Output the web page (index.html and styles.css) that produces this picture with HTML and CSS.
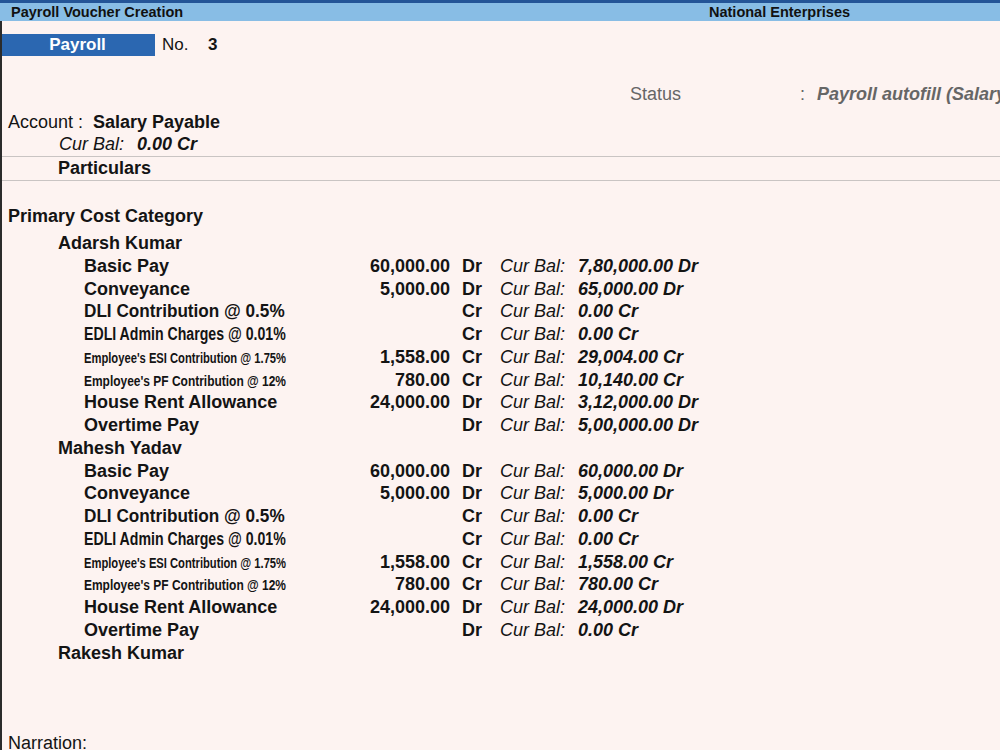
FILE: index.html
```html
<!DOCTYPE html>
<html>
<head>
    <title>Payroll Voucher Creation</title>
    <link rel="stylesheet" href="styles.css">
</head>
<body>
    <div class="titlebar">
        <span class="title">Payroll Voucher Creation</span>
        <span class="company">National Enterprises</span>
    </div>

    <div class="page">
        <div class="voucher-head">
            <span class="vtype">Payroll</span>
            <span class="vno-label">No.</span>
            <span class="vno">3</span>
        </div>

        <div class="status">
            <span class="status-label">Status</span>
            <span class="status-colon">:</span>
            <span class="status-value">Payroll autofill (Salary)</span>
        </div>

        <div class="account">
            <span class="account-label">Account :</span>
            <span class="account-name">Salary Payable</span>
        </div>
        <div class="account-bal">
            <span class="bal-label">Cur Bal:</span>
            <span class="bal-value">0.00 Cr</span>
        </div>

        <div class="particulars">Particulars</div>

        <div class="category">Primary Cost Category</div>

        <div class="person">Adarsh Kumar</div>
        <div class="line"><span class="name">Basic Pay</span><span class="amt">60,000.00</span><span class="drcr">Dr</span><span class="cb">Cur Bal:</span><span class="cbv">7,80,000.00 Dr</span></div>
        <div class="line"><span class="name">Conveyance</span><span class="amt">5,000.00</span><span class="drcr">Dr</span><span class="cb">Cur Bal:</span><span class="cbv">65,000.00 Dr</span></div>
        <div class="line"><span class="name"><span class="fit-dli">DLI Contribution @ 0.5%</span></span><span class="amt"></span><span class="drcr">Cr</span><span class="cb">Cur Bal:</span><span class="cbv">0.00 Cr</span></div>
        <div class="line"><span class="name"><span class="fit-edli">EDLI Admin Charges @ 0.01%</span></span><span class="amt"></span><span class="drcr">Cr</span><span class="cb">Cur Bal:</span><span class="cbv">0.00 Cr</span></div>
        <div class="line"><span class="name"><span class="fit-esi">Employee's ESI Contribution @ 1.75%</span></span><span class="amt">1,558.00</span><span class="drcr">Cr</span><span class="cb">Cur Bal:</span><span class="cbv">29,004.00 Cr</span></div>
        <div class="line"><span class="name"><span class="fit-pf">Employee's PF Contribution @ 12%</span></span><span class="amt">780.00</span><span class="drcr">Cr</span><span class="cb">Cur Bal:</span><span class="cbv">10,140.00 Cr</span></div>
        <div class="line"><span class="name">House Rent Allowance</span><span class="amt">24,000.00</span><span class="drcr">Dr</span><span class="cb">Cur Bal:</span><span class="cbv">3,12,000.00 Dr</span></div>
        <div class="line"><span class="name">Overtime Pay</span><span class="amt"></span><span class="drcr">Dr</span><span class="cb">Cur Bal:</span><span class="cbv">5,00,000.00 Dr</span></div>

        <div class="person">Mahesh Yadav</div>
        <div class="line"><span class="name">Basic Pay</span><span class="amt">60,000.00</span><span class="drcr">Dr</span><span class="cb">Cur Bal:</span><span class="cbv">60,000.00 Dr</span></div>
        <div class="line"><span class="name">Conveyance</span><span class="amt">5,000.00</span><span class="drcr">Dr</span><span class="cb">Cur Bal:</span><span class="cbv">5,000.00 Dr</span></div>
        <div class="line"><span class="name"><span class="fit-dli">DLI Contribution @ 0.5%</span></span><span class="amt"></span><span class="drcr">Cr</span><span class="cb">Cur Bal:</span><span class="cbv">0.00 Cr</span></div>
        <div class="line"><span class="name"><span class="fit-edli">EDLI Admin Charges @ 0.01%</span></span><span class="amt"></span><span class="drcr">Cr</span><span class="cb">Cur Bal:</span><span class="cbv">0.00 Cr</span></div>
        <div class="line"><span class="name"><span class="fit-esi">Employee's ESI Contribution @ 1.75%</span></span><span class="amt">1,558.00</span><span class="drcr">Cr</span><span class="cb">Cur Bal:</span><span class="cbv">1,558.00 Cr</span></div>
        <div class="line"><span class="name"><span class="fit-pf">Employee's PF Contribution @ 12%</span></span><span class="amt">780.00</span><span class="drcr">Cr</span><span class="cb">Cur Bal:</span><span class="cbv">780.00 Cr</span></div>
        <div class="line"><span class="name">House Rent Allowance</span><span class="amt">24,000.00</span><span class="drcr">Dr</span><span class="cb">Cur Bal:</span><span class="cbv">24,000.00 Dr</span></div>
        <div class="line"><span class="name">Overtime Pay</span><span class="amt"></span><span class="drcr">Dr</span><span class="cb">Cur Bal:</span><span class="cbv">0.00 Cr</span></div>

        <div class="person">Rakesh Kumar</div>

        <div class="narration">Narration:</div>
    </div>
</body>
</html>
```

FILE: styles.css
```css
html, body {
    margin: 0;
    padding: 0;
    height: 100%;
    overflow: hidden;
}
body {
    background-color: #fdf3f1;
    font-family: "Liberation Sans", Arial, sans-serif;
    font-size: 18px;
    color: #141414;
}
.titlebar {
    display: flex;
    height: 18px;
    line-height: 18px;
    border-top: 3px solid #245597;
    background-color: #88bde5;
    font-size: 14.5px;
    font-weight: bold;
    color: #111;
    padding-left: 11px;
    white-space: nowrap;
}
.title {
    width: 698px;
}
.page {
    border-left: 2px solid #2b2b2b;
    height: 729px;
    overflow: hidden;
}
.voucher-head {
    display: flex;
    align-items: center;
    margin-top: 13px;
    height: 22px;
    font-size: 17px;
}
.vtype {
    margin-left: -2px;
    width: 155px;
    height: 22px;
    line-height: 22px;
    background-color: #2b67b1;
    color: #fff;
    font-weight: bold;
    text-align: center;
}
.vno-label {
    margin-left: 7px;
    width: 46px;
}
.vno {
    font-weight: bold;
}
.status {
    display: flex;
    margin-top: 27px;
    height: 22px;
    line-height: 22px;
    color: #666;
    white-space: nowrap;
    overflow: hidden;
}
.status span {
    flex-shrink: 0;
}
.status-label {
    margin-left: 628px;
    width: 170px;
}
.status-colon {
    width: 17px;
}
.status-value {
    font-weight: bold;
    font-style: italic;
}
.account {
    display: flex;
    margin-top: 6px;
    height: 22px;
    line-height: 22px;
}
.account-label {
    padding-left: 6px;
    width: 85px;
    flex-shrink: 0;
}
.account-name {
    font-weight: bold;
}
.account-bal {
    display: flex;
    height: 22px;
    line-height: 22px;
}
.bal-label {
    padding-left: 57px;
    width: 78px;
    flex-shrink: 0;
    font-style: italic;
}
.bal-value {
    font-weight: bold;
    font-style: italic;
}
.particulars {
    margin-top: 1px;
    border-top: 1px solid #c9c4c3;
    border-bottom: 1px solid #c9c4c3;
    height: 23px;
    line-height: 23px;
    padding-left: 56px;
    font-weight: bold;
}
.category {
    margin-top: 24px;
    height: 22px;
    line-height: 22px;
    padding-left: 6px;
    font-weight: bold;
    margin-bottom: 5px;
}
.person {
    height: 22.76px;
    line-height: 22.76px;
    padding-left: 56px;
    font-weight: bold;
}
.line {
    display: grid;
    grid-template-columns: 286px 80px 50px 78px 1fr;
    height: 22.76px;
    line-height: 22.76px;
    padding-left: 82px;
    white-space: nowrap;
}
.name {
    font-weight: bold;
}
/* long ledger names squeezed into the column, as Tally does */
.fit-dli,
.fit-edli,
.fit-esi,
.fit-pf {
    display: inline-block;
    transform-origin: left center;
}
.fit-dli {
    transform: scaleX(0.953);
}
.fit-edli {
    transform: scaleX(0.785);
}
.fit-esi {
    font-size: 14.5px;
    transform: scaleX(0.772);
}
.fit-pf {
    font-size: 14.5px;
    transform: scaleX(0.825);
}
.amt {
    text-align: right;
    font-weight: bold;
}
.drcr {
    padding-left: 12px;
    font-weight: bold;
}
.cb {
    font-style: italic;
}
.cbv {
    font-weight: bold;
    font-style: italic;
}
.narration {
    margin-top: 68px;
    padding-left: 6px;
    height: 22px;
    line-height: 22px;
}
```
